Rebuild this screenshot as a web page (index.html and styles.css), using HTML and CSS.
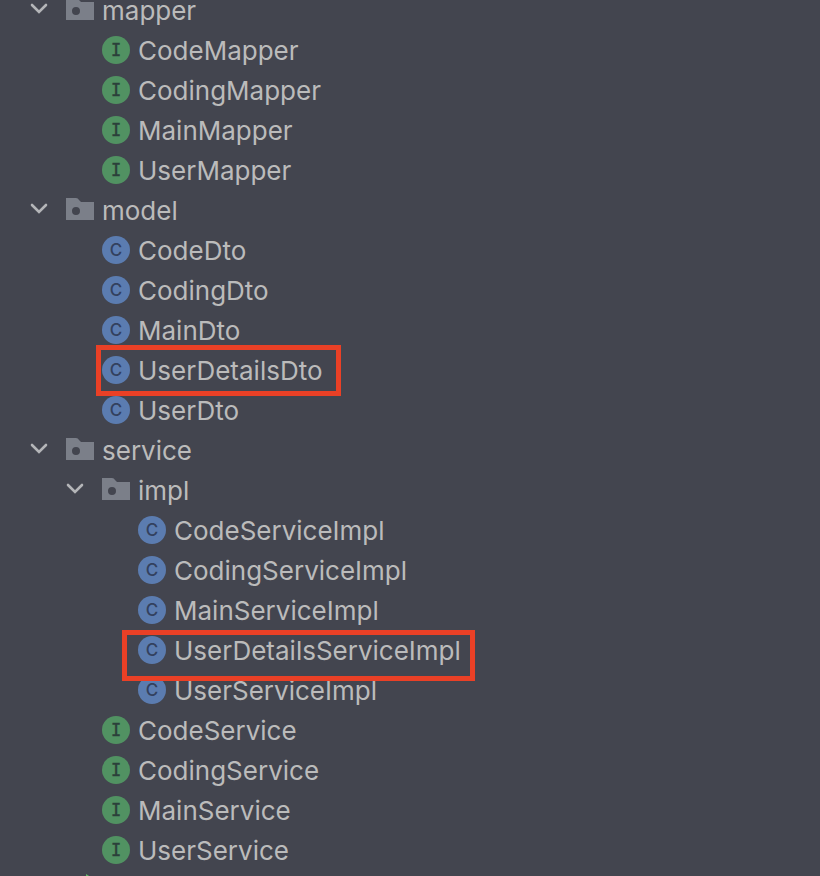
FILE: index.html
```html
<!DOCTYPE html>
<html lang="en">
<head>
    <meta charset="UTF-8">
    <meta name="viewport" content="width=device-width, initial-scale=1.0">
    <title>Project</title>
    <link rel="stylesheet" href="styles.css">
</head>
<body>
    <!-- Icon set -->
    <svg class="sprite" aria-hidden="true">
        <symbol id="chevron" viewBox="0 0 20 28">
            <path d="M2 9 L9 16 L16 9" fill="none" stroke="#b4b5b8" stroke-width="2.6" stroke-linecap="round" stroke-linejoin="miter"/>
        </symbol>
        <symbol id="package" viewBox="0 0 28 28">
            <path fill="#7b7f89" fill-rule="evenodd" d="M0 2h10q2 0 3 2l2 2h13v18H0zM10 11a4 4 0 1 0 0 8a4 4 0 1 0 0-8z"/>
        </symbol>
        <symbol id="interface" viewBox="0 0 28 28">
            <circle cx="14" cy="14" r="14" fill="#519262"/>
            <text class="letter letter-i" x="14" y="20">I</text>
        </symbol>
        <symbol id="class" viewBox="0 0 28 28">
            <circle cx="14" cy="14" r="14" fill="#5b7cb0"/>
            <text class="letter letter-c" x="14" y="20">C</text>
        </symbol>
        <symbol id="runnable" viewBox="0 0 28 28" overflow="visible">
            <circle cx="14" cy="14" r="14" fill="#5b7cb0"/>
            <path d="M20 -2 L31 5 L20 12z" fill="#62b565"/>
        </symbol>
    </svg>

    <ul class="tree">
        <li>
            <div class="row"><button class="toggle" aria-label="Collapse mapper"><svg><use href="#chevron"/></svg></button><svg class="icon"><use href="#package"/></svg><span>mapper</span></div>
            <ul>
                <li><div class="row"><svg class="icon"><use href="#interface"/></svg><span>CodeMapper</span></div></li>
                <li><div class="row"><svg class="icon"><use href="#interface"/></svg><span>CodingMapper</span></div></li>
                <li><div class="row"><svg class="icon"><use href="#interface"/></svg><span>MainMapper</span></div></li>
                <li><div class="row"><svg class="icon"><use href="#interface"/></svg><span>UserMapper</span></div></li>
            </ul>
        </li>
        <li>
            <div class="row"><button class="toggle" aria-label="Collapse model"><svg><use href="#chevron"/></svg></button><svg class="icon"><use href="#package"/></svg><span>model</span></div>
            <ul>
                <li><div class="row"><svg class="icon"><use href="#class"/></svg><span>CodeDto</span></div></li>
                <li><div class="row"><svg class="icon"><use href="#class"/></svg><span>CodingDto</span></div></li>
                <li><div class="row"><svg class="icon"><use href="#class"/></svg><span>MainDto</span></div></li>
                <li><div class="row marked marked-dto"><svg class="icon"><use href="#class"/></svg><span>UserDetailsDto</span></div></li>
                <li><div class="row"><svg class="icon"><use href="#class"/></svg><span>UserDto</span></div></li>
            </ul>
        </li>
        <li>
            <div class="row"><button class="toggle" aria-label="Collapse service"><svg><use href="#chevron"/></svg></button><svg class="icon"><use href="#package"/></svg><span>service</span></div>
            <ul>
                <li>
                    <div class="row"><button class="toggle" aria-label="Collapse impl"><svg><use href="#chevron"/></svg></button><svg class="icon"><use href="#package"/></svg><span>impl</span></div>
                    <ul>
                        <li><div class="row"><svg class="icon"><use href="#class"/></svg><span>CodeServiceImpl</span></div></li>
                        <li><div class="row"><svg class="icon"><use href="#class"/></svg><span>CodingServiceImpl</span></div></li>
                        <li><div class="row"><svg class="icon"><use href="#class"/></svg><span>MainServiceImpl</span></div></li>
                        <li><div class="row marked marked-impl"><svg class="icon"><use href="#class"/></svg><span>UserDetailsServiceImpl</span></div></li>
                        <li><div class="row"><svg class="icon"><use href="#class"/></svg><span>UserServiceImpl</span></div></li>
                    </ul>
                </li>
                <li><div class="row"><svg class="icon"><use href="#interface"/></svg><span>CodeService</span></div></li>
                <li><div class="row"><svg class="icon"><use href="#interface"/></svg><span>CodingService</span></div></li>
                <li><div class="row"><svg class="icon"><use href="#interface"/></svg><span>MainService</span></div></li>
                <li><div class="row"><svg class="icon"><use href="#interface"/></svg><span>UserService</span></div></li>
            </ul>
        </li>
        <li><div class="row"><svg class="icon"><use href="#runnable"/></svg></div></li>
    </ul>
</body>
</html>
```

FILE: styles.css
```css
body {
    margin: 0;
    height: 100vh;
    overflow: hidden;
    background: #43454f;
    color: #bbbbbb;
    font-family: Inter, sans-serif;
    font-size: 26px;
}
.sprite {
    display: none;
}
/* List is scrolled a little past its first row */
.tree {
    margin: -10px 0 0;
    padding-left: 30px;
}
ul {
    list-style: none;
    margin: 0;
    padding-left: 36px;
}
.row {
    position: relative;
    display: flex;
    align-items: center;
    width: max-content;
    height: 40px;
    padding-left: 36px;
    line-height: 38px;
    white-space: nowrap;
}
.row span {
    padding-top: 2px;
}
.toggle {
    width: 20px;
    height: 28px;
    margin: 0 16px 0 -36px;
    padding: 0;
    border: none;
    background: none;
    cursor: pointer;
}
.toggle svg {
    display: block;
    width: 20px;
    height: 28px;
}
.icon {
    flex: none;
    width: 28px;
    height: 28px;
    margin-right: 8px;
    overflow: visible;
}
.letter {
    font-size: 17px;
    text-anchor: middle;
}
.letter-i {
    font-family: "DejaVu Sans Mono", monospace;
    fill: #2b403a;
    stroke: #2b403a;
    stroke-width: 0.4px;
}
.letter-c {
    font-family: Inter, sans-serif;
    font-weight: 500;
    fill: #33415e;
}
/* Red frame around the highlighted classes */
.marked::after {
    content: "";
    position: absolute;
    z-index: 1;
    box-sizing: border-box;
    height: 51px;
    border: 5px solid #ea4026;
}
.marked-dto::after {
    top: -5px;
    left: 30px;
    right: -18px;
}
.marked-impl::after {
    top: 0;
    left: 20px;
    right: -14px;
}
```
